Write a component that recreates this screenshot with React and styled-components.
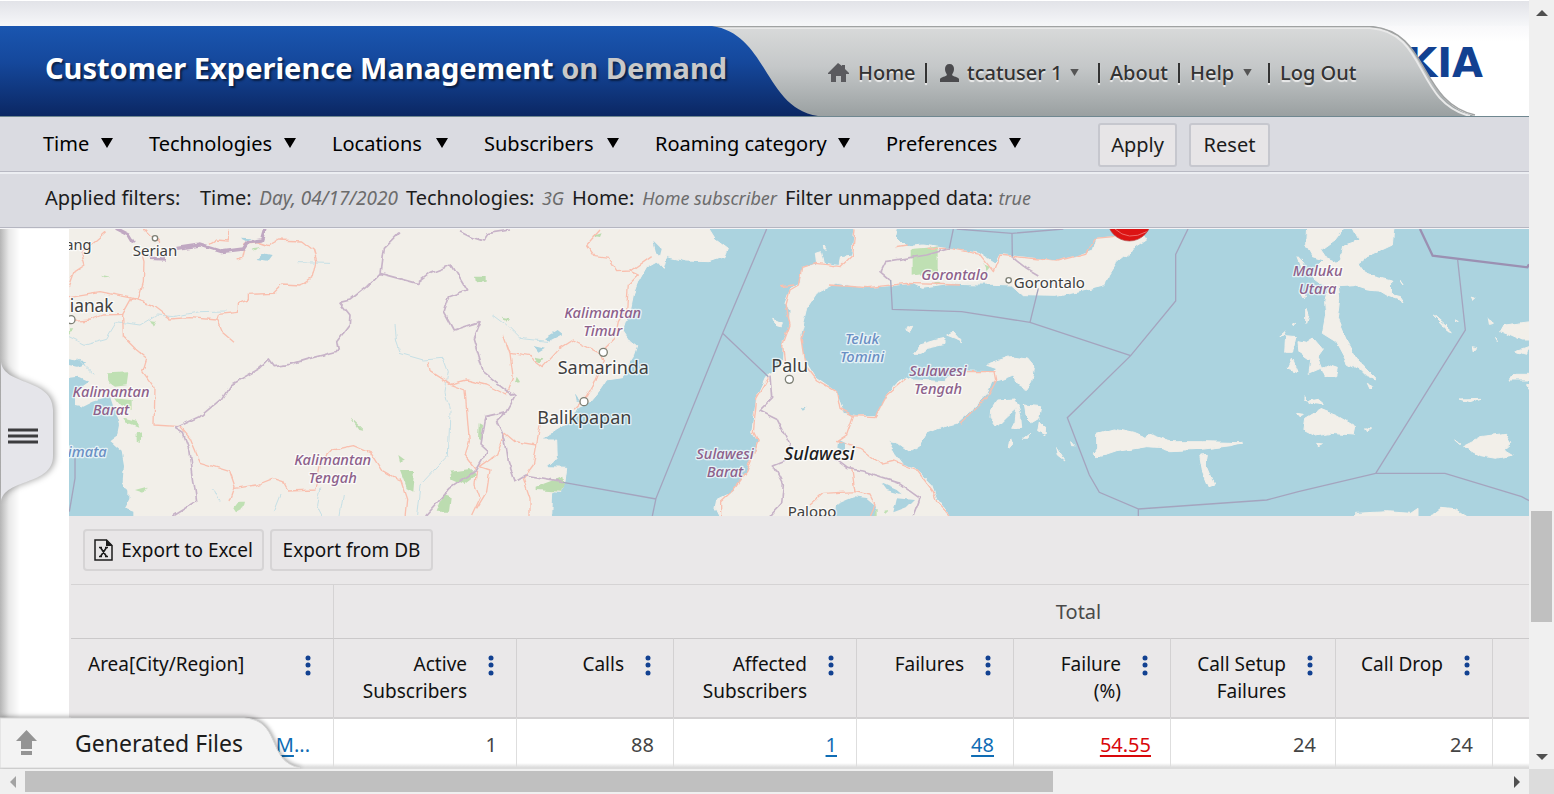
import React from "react";
import styled, { createGlobalStyle } from "styled-components";

const GlobalStyle = createGlobalStyle`
  *, *::before, *::after { box-sizing: border-box; }
  body {
    margin: 0;
    background: #fff;
    color: #1c1c1c;
    font-family: "Noto Sans", "Open Sans", sans-serif;
    font-size: 20px;
  }
  button { font: inherit; color: inherit; cursor: pointer; }
`;

/* ---------- frame ---------- */

const Frame = styled.div`
  display: grid;
  grid-template-columns: minmax(0, 1fr) 25px;
  grid-template-rows: minmax(0, 1fr) 25px;
  height: 100vh;
  overflow: hidden;
`;

const Page = styled.div`
  position: relative;
  display: flex;
  flex-direction: column;
  overflow: hidden;
`;

const ScrollBar = styled.div`
  display: flex;
  flex-direction: ${(p) => (p.$horizontal ? "row" : "column")};
  background: #f0f0f0;
  padding: ${(p) => (p.$horizontal ? "2px 0" : "0 2px")};
`;

const ScrollArrow = styled.div`
  flex: none;
  width: ${(p) => (p.$horizontal ? "25px" : "auto")};
  height: ${(p) => (p.$horizontal ? "auto" : "25px")};
  display: flex;
  align-items: center;
  justify-content: center;
`;

const ScrollSpace = styled.div`
  flex: ${(p) => p.$part} 1 0;
`;

const ScrollThumb = styled(ScrollSpace)`
  background: #c0c0c0;
`;

const ScrollCorner = styled.div`
  background: #dcdcdc;
`;

/* ---------- header ---------- */

const TopStrip = styled.div`
  flex: none;
  height: 26px;
  border-top: 1px solid #fff;
  background: linear-gradient(#e2e3e8, #f6f7f9);
`;

const Header = styled.header`
  position: relative;
  flex: none;
  display: flex;
  height: 91px;
  background: linear-gradient(#f8f8fa, #fff 16px);
  border-bottom: 1px solid #6f8790;
`;

const HeaderShape = styled.svg`
  position: absolute;
  inset: 0;
  width: 100%;
  height: 90px;
`;

const Brand = styled.div`
  position: absolute;
  right: 46px;
  top: 15px;
  line-height: 44px;
  font-family: "DejaVu Sans", sans-serif;
  font-weight: 700;
  font-size: 40px;
  color: #124191;
`;

const Title = styled.h1`
  position: relative;
  flex: none;
  width: 828px;
  margin: 0;
  padding-left: 45px;
  font-size: 29px;
  line-height: 84px;
  font-weight: 700;
  color: #fff;
  white-space: nowrap;
  text-shadow: 2px 2px 2px rgba(0, 0, 0, 0.5);
  span { color: #c9c9c9; }
`;

const Nav = styled.nav`
  position: relative;
  display: flex;
  align-items: center;
  height: 90px;
  padding-top: 3px;
  white-space: nowrap;
  font-weight: 500;
  color: #333;
  text-shadow: 0 2px 1px #eee;
`;

const NavLink = styled.a`
  display: flex;
  align-items: center;
  gap: ${(p) => (p.$iconGap ? "8px" : "9px")};
  width: ${(p) => p.$width}px;
  color: inherit;
  text-decoration: none;
  svg { flex: none; }
`;

const NavDivider = styled.span`
  width: 2px;
  height: 20px;
  margin: 0 ${(p) => (p.$wide ? "13px" : "10px")} 0 ${(p) => (p.$after ? "19px" : "10px")};
  background: #333;
  box-shadow: 0 2px 1px #eee;
`;

/* ---------- filter bars ---------- */

const FilterBar = styled.div`
  flex: none;
  display: flex;
  align-items: center;
  height: 55px;
  padding: 0 0 2px 43px;
  background: #dadbe1;
  border-bottom: 1px solid #b8b9c3;
`;

const FilterMenu = styled.button`
  display: flex;
  align-items: center;
  justify-content: space-between;
  width: ${(p) => p.$width}px;
  margin: 0 36px 0 0;
  padding: 0;
  border: 0;
  background: none;
  color: #000;
  white-space: nowrap;
`;

const BarButton = styled.button`
  height: 44px;
  width: ${(p) => p.$width}px;
  padding: 0;
  margin: 3px 12px 0 ${(p) => (p.$first ? "41px" : "0")};
  border: 2px solid #c6c7ce;
  border-radius: 3px;
  background: #e7e5e7;
`;

const AppliedBar = styled.div`
  flex: none;
  display: flex;
  align-items: center;
  height: 56px;
  padding: 0 0 6px 45px;
  background: #dadbe1;
  border-top: 2px solid #eceef2;
  border-bottom: 1px solid #b5b6c1;
  white-space: nowrap;
`;

const AppliedLabel = styled.span`
  width: 155px;
`;

const AppliedItem = styled.span`
  display: flex;
  align-items: baseline;
  justify-content: space-between;
  width: ${(p) => p.$width}px;
  margin-right: 8px;
  em { font-size: ${(p) => (p.$wide ? "19px" : "18px")}; color: #6c6c6c; }
`;

/* ---------- body ---------- */

const Body = styled.div`
  flex: 1;
  min-height: 0;
  display: flex;
  border-top: 1px solid #f4f4f6;
`;

const Gutter = styled.aside`
  flex: none;
  width: 69px;
  padding-top: 123px;
  background: linear-gradient(90deg, #b5b5b5, #e9e9e9 9px, #fff 20px);
`;

const DrawerButton = styled.button`
  display: block;
  padding: 0;
  border: 0;
  background: none;
  svg { display: block; overflow: visible; }
`;

const Main = styled.main`
  flex: 1;
  min-width: 0;
  overflow: hidden;
  background: #eae8e9;
`;

const MapView = styled.div`
  height: 287px;
  overflow: hidden;
  background: #abd3df;
  svg { display: block; width: 1460px; min-width: 100%; height: 287px; }
`;

const Toolbar = styled.div`
  display: flex;
  gap: 6px;
  height: 68px;
  padding: 13px 14px;
`;

const ToolButton = styled.button`
  display: flex;
  align-items: center;
  justify-content: center;
  gap: 8px;
  height: 42px;
  width: ${(p) => p.$width}px;
  padding: 0;
  border: 2px solid #d6d4d5;
  border-radius: 4px;
  background: #e8e6e7;
  color: #111;
  font-size: 19px;
  white-space: nowrap;
`;

const Table = styled.table`
  width: 1753px;
  margin-left: 2px;
  table-layout: fixed;
  border-collapse: separate;
  border-spacing: 0;
`;

const GroupCell = styled.th`
  height: 54px;
  padding: 0;
  border-top: 1px solid #d5d3d4;
  border-right: 1px solid #d5d3d4;
  font-weight: 400;
  color: #4a4a4a;
`;

const HeadCell = styled.th`
  height: 79px;
  padding: 12px 20px 0 17px;
  border-top: 1px solid #cbc9ca;
  border-right: 1px solid #d3d1d2;
  vertical-align: top;
  font-weight: 400;
  font-size: 19px;
  line-height: 27px;
  color: #111;
`;

const HeadContent = styled.div`
  display: flex;
  justify-content: ${(p) => (p.$start ? "space-between" : "flex-end")};
  gap: 19px;
  text-align: right;
  white-space: nowrap;
`;

const KebabButton = styled.button`
  height: 27px;
  padding: 0 2px;
  border: 0;
  background: none;
  svg { display: block; }
`;

const Cell = styled.td`
  height: 60px;
  padding: 0 ${(p) => (p.$name ? "23px" : "19px")} 8px 0;
  border-top: 2px solid #d3d1d2;
  border-right: 1px solid #dedede;
  background: #fff;
  text-align: right;
  color: #444;
`;

const CellLink = styled.a`
  color: ${(p) => (p.$alert ? "#d9070a" : "#0f6cb4")};
  text-decoration: underline;
  text-decoration-thickness: 2px;
  text-underline-offset: 3px;
`;

const Dots = styled.span`
  color: #0f6cb4;
`;

const BottomShade = styled.div`
  position: absolute;
  left: 0;
  right: 0;
  bottom: 0;
  height: 6px;
  border-bottom: 2px solid #dcdcdc;
  background: linear-gradient(rgba(230, 230, 230, 0), #dedede);
`;

const FilesTab = styled.button`
  position: absolute;
  left: 0;
  bottom: 0;
  display: flex;
  align-items: center;
  gap: 38px;
  width: 304px;
  height: 52px;
  padding: 0 0 0 16px;
  border: 0;
  background: none;
  font-size: 23px;
  white-space: nowrap;
`;

const TabShape = styled.svg`
  position: absolute;
  inset: 0;
  overflow: visible;
`;

const TabIcon = styled.svg`
  position: relative;
  flex: none;
`;

const TabText = styled.span`
  position: relative;
`;

/* ---------- drawings ---------- */

const Triangle = ({ size = 12, color = "#000" }) => (
  <svg width={size} height={size - 2} viewBox="0 0 12 10" aria-hidden="true">
    <path d="M0 0H12L6 10Z" fill={color} />
  </svg>
);

const arrowPaths = {
  up: "M0 6L6 0L12 6Z",
  down: "M0 0H12L6 6Z",
  left: "M6 0V12L0 6Z",
  right: "M0 0V12L6 6Z",
};

const Arrow = ({ dir, color = "#505050" }) => {
  const tall = dir === "left" || dir === "right";
  return (
    <svg width={tall ? 6 : 12} height={tall ? 12 : 6} aria-hidden="true">
      <path d={arrowPaths[dir]} fill={color} />
    </svg>
  );
};

const HomeIcon = () => (
  <svg width="21" height="20" viewBox="0 0 21 20" aria-hidden="true">
    <path d="M10 0L14 3V2H17V6L21 10V11H18V19H13V13H8V19H3V11H0V10Z" fill="#5a5a5e" />
  </svg>
);

const UserIcon = () => (
  <svg width="19" height="18" viewBox="0 0 19 18" aria-hidden="true">
    <path d="M9.500 0C12.500 0 14 2 14 5C14 8 12.500 9 12 11C13 12.500 18 13 19 15V18H0V15C1 13 6 12.500 7 11C6.500 9 5 8 5 5C5 2 6.500 0 9.500 0Z" fill="#4b4b4e" />
  </svg>
);

const ExcelIcon = () => (
  <svg width="19" height="22" viewBox="0 0 19 22" aria-hidden="true">
    <path d="M1 1H12.500L18 6.500V21H1Z" fill="none" stroke="#1c1c1c" strokeWidth="1.500" />
    <path d="M12 0.500L18.500 7H12Z" fill="#1c1c1c" />
    <path d="M5 8.500H8M11 8.500H14M5 17.500H8M11 17.500H14M6.500 8.500L12.500 17.500M12.500 8.500L6.500 17.500" stroke="#1c1c1c" strokeWidth="1.600" fill="none" />
  </svg>
);

const Kebab = () => (
  <svg width="6" height="22" viewBox="0 0 6 22" aria-hidden="true" fill="#124191">
    <circle cx="3" cy="4" r="2.500" />
    <circle cx="3" cy="11" r="2.500" />
    <circle cx="3" cy="19" r="2.500" />
  </svg>
);

const HeaderBackdrop = () => (
  <HeaderShape viewBox="0 0 1529 90" preserveAspectRatio="none" aria-hidden="true">
    <defs>
      <linearGradient id="grey" x1="0" y1="0" x2="0" y2="1">
        <stop offset="0" stopColor="#d9dada" />
        <stop offset="0.450" stopColor="#c5c8c9" />
        <stop offset="1" stopColor="#9aa0a1" />
      </linearGradient>
      <linearGradient id="blue" x1="0" y1="0" x2="0" y2="1">
        <stop offset="0" stopColor="#1a56b0" />
        <stop offset="0.400" stopColor="#15489c" />
        <stop offset="1" stopColor="#0b2763" />
      </linearGradient>
    </defs>
    <path d="M600 0H1370C1430 4 1418 76 1475 90H600Z" fill="url(#grey)" />
    <path d="M600 2H1370C1428 6 1414 76 1470 90" fill="none" stroke="#e9e9e9" strokeWidth="2" />
    <path d="M600 0.500H1370C1430 4 1418 76 1475 89" fill="none" stroke="#a0a2a2" strokeWidth="1.500" />
    <path d="M0 0H712C768 8 764 82 818 90H0Z" fill="url(#blue)" />
  </HeaderShape>
);

const landPaths = [
  // Borneo
  "M200 0H2120L2145 40L2185 70L2175 95L2130 110L2060 108L2000 95L1990 130L1970 108L1940 125L1915 170L1900 210L1890 260L1870 320L1890 350L1910 365L1900 395L1880 425L1868 458L1820 465L1800 495L1770 530L1735 545L1710 590L1670 615L1625 645L1670 645L1672 700L1640 728L1700 730L1695 770L1680 802L1655 800L1652 880H200Z",
];

const sulawesiPaths = [
  "M225 5L215 90L185 95L180 122L130 115L122 80L106 85L110 120L65 130L60 175L32 190L15 235L30 260L28 310L10 350L8 400L-5 430L-40 455L-70 520L-85 620L-65 650L-100 740L-140 800L-190 825L-195 850L-180 880H515L470 820L455 780L405 730L370 718L345 685L325 650L355 655L390 680L420 660L440 625L490 605L530 595L580 550L620 510L635 470L660 465L700 450L715 480L740 493L755 470L763 430L740 402L690 395L620 418L650 428L640 440L560 438L500 455L495 470L400 465L380 455L355 470L320 510L290 572L230 572L190 565L170 500L105 455L70 400L60 330L80 250L110 205L170 175L250 188L330 182L400 175L430 190L530 175L640 178L695 180L730 212L830 214L900 200L975 182L985 150L1010 110L1060 70L1100 45L1090 30L1000 35L950 40L940 75L900 90L830 108L720 95L660 88L645 115L600 85L510 72L430 60L380 65L345 30L350 5Z",
  "M400 385L420 360L470 345L495 340V358L440 370L420 385ZM500 330L520 322L545 350L525 340ZM380 305L398 307L390 322L378 315Z",
  "M650 525L705 522L715 545L680 575L650 605L630 580L632 555ZM712 540L722 570L725 610H695L705 590ZM730 540L785 545L780 575L755 590L735 570ZM775 590L797 610L795 632L770 620ZM695 640L700 655L685 672L688 650ZM730 640L750 625L740 640ZM830 668L855 705L835 690ZM875 650L885 662H878Z",
  "M950 625L1000 612L1060 625L1095 640L1110 628L1145 640L1160 652L1200 650L1270 650L1350 652L1385 655L1290 665L1180 670L1100 665L1010 680L980 690L950 695L940 685L950 670Z",
  "M-25 280L10 295L5 305L-15 300ZM130 60L138 72H132Z",
];

const malukuPaths = [
  "M458 5L455 60L475 95L510 105L485 130L480 160L520 190L512 230L515 270L505 325L545 350L580 415L620 435L640 455L665 462L615 410L575 340L550 280L557 220L553 185L600 182L640 195L675 198L700 213L750 230L740 215L712 208L713 168L640 150L615 115L640 95L715 60L720 5H595L615 45L570 60L560 100L550 115L515 100L498 75L540 45L570 5Z",
  "M395 332L425 335L415 385H392ZM432 350L455 355L478 340L508 375L490 400L503 430L520 420L550 430L545 452L510 455L500 430L465 445L470 405L435 380ZM415 400L432 440L402 430ZM375 335L398 315L390 330ZM415 300L425 295L418 305ZM455 250L462 270L455 295ZM432 95L450 115L445 130ZM440 205L458 210L450 222Z",
  "M450 515L460 528L450 525ZM465 525L490 520L512 540L470 535ZM428 565L448 568L435 575ZM455 580L500 553L550 573L605 605L600 630L530 625L485 633L450 615ZM635 608L650 612L640 620ZM485 655L500 657L490 662Z",
  "M137 690L160 688L155 720L180 780L165 785L145 735Z",
  "M0 638L50 650L110 655L230 655L262 652L230 662L150 672L50 677L0 660Z",
  "M605 865L700 860L770 865L792 850V880H605ZM835 870L860 850L910 855L945 880H835Z",
  "M926 662L980 635L1055 625L1073 655L1050 675L1075 690L1025 700L980 692Z",
  "M1040 318L1050 300L1130 290V345L1105 345L1060 325ZM1085 378L1122 365L1115 388ZM1065 465L1075 448H1130V465ZM918 522L978 520L945 530ZM838 270L895 320L880 315ZM955 212L966 218L960 224ZM1003 278L1015 295L1006 298ZM955 365L968 368L958 380ZM1025 340L1030 350ZM900 285L910 290ZM740 165L750 180ZM640 475L655 485L648 492ZM905 645L915 652ZM1115 478L1130 480V500Z",
];

const roads = [
  "M207 215L300 200L390 218L455 240L510 282L570 278L650 285L655 268L715 262V235L745 225V208L820 205L845 180L900 183L940 155L950 110L940 75L905 48L835 45L805 62L770 50L735 55L725 100L710 105",
  "M207 290L270 285L310 270L368 268L395 220L415 222L430 170L432 110L425 85",
  "M368 268L370 335L410 375L440 400L428 440L465 490L462 600L540 605L570 640L600 712L690 740L705 785L690 828",
  "M705 790L770 780L820 760L850 770L865 798L945 795L960 720L1000 675L1060 662L1115 685L1150 740L1200 768",
  "M650 285L665 320L702 352M207 190L225 140L255 120L245 85L320 20M430 10L450 30L480 50M630 58L650 45L685 48V10",
  "M1800 15L1760 60L1785 95L1825 100L1850 140L1890 138L1955 92M1890 138L1915 150L1885 180L1880 250L1855 290L1845 340L1800 385L1810 410L1785 470L1760 515L1725 550M1800 385L1720 345L1680 370L1630 425L1590 395L1530 385L1510 330M1530 385L1540 460L1520 510L1460 480L1400 465L1350 478L1290 440L1285 412M1350 478L1395 495L1408 650L1395 690L1430 735L1425 780L1440 820L1415 873M1440 725L1470 735L1460 800L1430 850M1440 725L1490 690L1515 625L1545 650L1610 660L1600 720L1570 760L1590 820V873M1610 660L1620 600M1200 760L1220 820L1215 873",
  "M2565 10L2558 90L2522 125L2450 115L2405 130L2395 180L2370 195L2358 240L2370 300L2348 360L2355 420M2780 70L2850 70L2940 88L2980 140L3000 90L3170 108L3260 85L3285 40L3340 35M2410 320L2403 340L2415 420L2450 465L2510 500L2520 550L2560 572L2625 575L2660 510L2720 458M2560 572L2540 630L2510 650L2580 670L2640 718L2685 708L2750 735L2800 800L2810 830L2850 873M2555 730L2565 800L2470 805L2430 840M2565 800L2610 810L2625 840L2610 873M2900 440L2985 440L2990 465L2960 520L2880 598M2305 460L2270 520L2260 620L2275 650L2240 740L2200 795L2162 830V873M2690 65L2720 60M2340 185L2380 180M2490 180L2600 188L2720 175L2880 180",
];

const landBorders = [
  "M345 10L385 30L400 55M450 100L495 102M530 70L600 60L665 80L730 72L745 50L785 45L795 10",
  "M1200 20L1150 70L1140 145L1100 185L1050 225L1020 232L1050 270L1048 300L1010 350L1015 378L930 400L870 418L820 425L805 405L780 430L690 480L665 520L600 575L525 610L550 625L570 680L580 760L590 830L520 873",
  "M1140 145L1250 175L1290 145L1355 120L1400 195L1345 215L1330 260L1360 315L1440 290L1420 340L1450 440L1545 515L1520 560L1455 575L1440 660L1462 680L1430 735L1350 790L1280 870M1520 560L1490 590L1515 640L1525 710L1545 768L1575 750L1690 770",
  "M2310 455L2315 520L2280 555L2330 580L2370 660V700L2320 720L2350 780L2345 835L2310 873M2500 700L2540 730L2590 738L2690 770L2760 820L2740 873M2670 165L2640 140L2655 110L2780 90L2850 70M3035 95L3080 130L3115 150",
  "M1380 20L1410 35L1450 48L1465 25L1530 15",
];

const seaBorders = [
  "M2300 12L2168 325L1968 820L1957 873M2168 325L2305 455M1690 772L1968 822",
  "M2860 12L2848 70M2672 165L2677 253L2885 260L3090 292L3392 392M3036 25L3037 95M3115 190L3090 292M3564 12L3527 88V228L3392 392L3202 578L3268 750L3298 802L3415 852V880M3415 852L3800 825L3895 800L4127 745H4335L4565 815L4590 828M4127 745L4396 315L4373 105",
  "M225 700V760L208 860M2870 12L3036 25L3190 12",
];

const greens = [
  ["#bfe0b3", "M325 445L385 442L380 478L345 482L328 470ZM345 520L395 525V555L360 540ZM370 580L410 590L415 605L380 592ZM410 625L425 622L422 655L410 650ZM700 850L715 830H735L730 850L708 862ZM450 285L470 288L462 305ZM405 795L440 785L430 803ZM207 310H220L207 330ZM300 152L328 158L310 160ZM755 70L785 66L765 76Z"],
  ["#bcdcb0", "M1350 740L1410 732L1430 750L1390 780L1355 765ZM1425 155H1460V170L1428 175ZM1436 595L1446 600L1442 650L1434 645ZM1200 738H1245L1240 800L1220 790ZM1610 785L1690 755L1695 780L1680 800L1610 795ZM1310 860L1330 810L1355 820L1350 860ZM1605 395L1630 400L1620 415ZM1550 455L1560 470L1545 475ZM1508 275L1530 280L1520 290ZM1780 32L1805 25L1800 36ZM1050 575L1090 615L1075 612ZM1195 690L1215 705L1200 710Z"],
  ["#bfe0b3", "M2735 72L2813 65V140L2735 152ZM2950 118L2970 125L2960 138ZM2800 172L2822 175L2810 182ZM2620 855L2630 852V873H2622ZM2650 860L2668 858L2655 870Z"],
];

const lakes = [
  "M207 400L240 405L260 415L230 425L207 420Z",
  "M200 460L235 455L268 470L225 500L225 540L250 545L280 530L330 515L345 560L357 600L350 635L330 650L365 680L372 720L368 770L385 800V825L372 850L400 860V880H200Z",
  "M790 85L815 90L800 110L770 105ZM722 38L755 40L740 48ZM1635 340L1670 318L1685 330L1650 348ZM1600 360L1635 368L1615 380ZM1725 505L1742 530L1730 530Z",
  "M2515 645L2535 655V678L2512 668ZM2505 840L2560 817L2600 822L2628 845L2620 880H2500ZM2645 775L2690 795L2705 808L2660 795ZM2690 820L2745 825L2720 850L2680 865ZM2405 545L2420 542L2412 555Z",
  "M1960 50L1985 75L1980 95L1968 80Z",
];

const rivers = [
  "M207 335L255 358L320 340L350 290L420 300L470 270L520 275L600 260L680 258",
  "M890 110L990 112M1200 385L1270 405L1330 400L1345 440L1335 500L1350 560L1345 690L1260 780L1250 873M1480 270L1520 300L1560 340L1650 350M820 860L840 810M960 790L950 840L965 870M1185 300L1190 350L1200 380M230 400L280 445M640 790L660 830M1030 810L1020 870",
];

const towns = [
  [465, 40, 8],
  [213, 284, 12],
  [1810, 382, 12],
  [1752, 530, 12],
  [2368, 463, 12],
  [3026, 166, 8],
];

const mapLabels = [
  { x: 235, y: 76, size: 44, kind: "town", lines: ["ang"] },
  { x: 465, y: 92, size: 45, kind: "town", lines: ["Serian"] },
  { x: 275, y: 260, size: 52, kind: "town", lines: ["ianak"] },
  { x: 333, y: 515, size: 44, kind: "region", lines: ["Kalimantan", "Barat"] },
  { x: 262, y: 697, size: 44, kind: "water", lines: ["imata"] },
  { x: 998, y: 719, size: 44, kind: "region", lines: ["Kalimantan", "Tengah"] },
  { x: 1808, y: 278, size: 44, kind: "region", lines: ["Kalimantan", "Timur"] },
  { x: 1810, y: 446, size: 54, kind: "town", lines: ["Samarinda"] },
  { x: 1753, y: 598, size: 54, kind: "town", lines: ["Balikpapan"] },
  { x: 2369, y: 440, size: 54, kind: "town", lines: ["Palu"] },
  { x: 2175, y: 701, size: 44, kind: "region", lines: ["Sulawesi", "Barat"] },
  { x: 2458, y: 705, size: 54, kind: "island", lines: ["Sulawesi"] },
  { x: 2436, y: 877, size: 45, kind: "town", lines: ["Palopo"] },
  { x: 2586, y: 358, size: 44, kind: "water", lines: ["Teluk", "Tomini"] },
  { x: 2864, y: 164, size: 44, kind: "region", lines: ["Gorontalo"] },
  { x: 3148, y: 188, size: 45, kind: "town", lines: ["Gorontalo"] },
  { x: 2814, y: 454, size: 44, kind: "region", lines: ["Sulawesi", "Tengah"] },
  { x: 3953, y: 153, size: 44, kind: "region", lines: ["Maluku", "Utara"] },
];

const labelColors = { town: "#3f3f3f", region: "#8d618b", water: "#6a8fc4", island: "#1d1d1d" };

const RegionMap = () => (
  <MapView>
    <svg viewBox="207 12 4380 861" preserveAspectRatio="xMinYMin slice" role="img" aria-label="Region map">
      <defs>
        <filter id="coast" filterUnits="userSpaceOnUse" x="150" y="0" width="4500" height="900">
          <feTurbulence type="fractalNoise" baseFrequency="0.030" numOctaves="2" seed="4" />
          <feDisplacementMap in="SourceGraphic" scale="16" xChannelSelector="R" yChannelSelector="G" />
        </filter>
      </defs>
      <g filter="url(#coast)">
        <g fill="#f2efe9" stroke="#f2efe9" strokeWidth="3" strokeLinejoin="round">
          {landPaths.map((d) => <path key={d} d={d} />)}
          <g transform="translate(2340 0)">{sulawesiPaths.map((d) => <path key={d} d={d} />)}</g>
          <g transform="translate(3462 0)">{malukuPaths.map((d) => <path key={d} d={d} />)}</g>
        </g>
        {greens.map(([fill, d]) => <path key={d} d={d} fill={fill} />)}
        {lakes.map((d) => <path key={d} d={d} fill="#abd3df" />)}
        <g fill="none" strokeLinejoin="round">
          {rivers.map((d) => <path key={d} d={d} stroke="#c6e0e6" strokeWidth="3" />)}
          {roads.map((d) => <path key={d} d={d} stroke="#f9bfae" strokeWidth="4" />)}
          {landBorders.map((d) => <path key={d} d={d} stroke="#c7b3c8" strokeWidth="5" />)}
          <path d={landBorders[0]} stroke="#c0a8c2" strokeWidth="10" />
        </g>
      </g>
      <g fill="none" stroke="#a4a4be" strokeWidth="4">
        {seaBorders.map((d) => <path key={d} d={d} />)}
        <path d="M4260 12L4298 92L4582 127L4587 118" stroke="#9b90b2" strokeWidth="7" />
      </g>
      <circle cx="3388" cy="-18" r="66" fill="#dc1414" stroke="#b04a4a" strokeWidth="2" />
      <path d="M3345 12Q3385 50 3440 20" fill="none" stroke="#ee6a6a" strokeWidth="3" />
      {towns.map(([cx, cy, r]) => (
        <circle key={cx} cx={cx} cy={cy} r={r} fill="#fff" stroke="#7d7f74" strokeWidth="4" />
      ))}
      {mapLabels.map((l) => (
        <text
          key={l.x + l.lines[0]}
          textAnchor="middle"
          fontSize={l.size}
          fontWeight={l.kind === "island" ? 500 : l.kind === "town" ? 450 : 500}
          fontStyle={l.kind === "town" ? "normal" : "italic"}
          fill={labelColors[l.kind]}
          stroke="#fff"
          strokeOpacity="0.700"
          strokeWidth="8"
          strokeLinejoin="round"
          paintOrder="stroke"
        >
          {l.lines.map((t, i) => (
            <tspan key={t} x={l.x} y={l.y + i * 54}>{t}</tspan>
          ))}
        </text>
      ))}
    </svg>
  </MapView>
);

/* ---------- data ---------- */

const filters = [
  ["Time", 70],
  ["Technologies", 147],
  ["Locations", 116],
  ["Subscribers", 135],
  ["Roaming category", 195],
  ["Preferences", 135],
];

const applied = [
  ["Time:", "Day, 04/17/2020", 198, true],
  ["Technologies:", "3G", 158],
  ["Home:", "Home subscriber", 205],
  ["Filter unmapped data:", "true", 246],
];

const columns = [
  { lines: ["Area[City/Region]"], width: 263, start: true },
  { lines: ["Active", "Subscribers"], width: 183, value: "1" },
  { lines: ["Calls"], width: 157, value: "88" },
  { lines: ["Affected", "Subscribers"], width: 183, value: "1", link: true },
  { lines: ["Failures"], width: 157, value: "48", link: true },
  { lines: ["Failure", "(%)"], width: 157, value: "54.55", link: true, alert: true },
  { lines: ["Call Setup", "Failures"], width: 165, value: "24" },
  { lines: ["Call Drop"], width: 157, value: "24" },
  { lines: [""], width: 331, value: "" },
];

export default function App() {
  return (
    <>
      <GlobalStyle />
      <Frame>
        <Page>
          <TopStrip />
          <Header>
            <Brand>KIA</Brand>
            <HeaderBackdrop />
            <Title>Customer Experience Management <span>on Demand</span></Title>
            <Nav>
              <NavLink href="#home" $width={87}><HomeIcon />Home</NavLink>
              <NavDivider $wide />
              <NavLink href="#user" $iconGap $width={139}><UserIcon />tcatuser 1<Triangle size={9} color="#555" /></NavLink>
              <NavDivider $after />
              <NavLink href="#about" $width={58}>About</NavLink>
              <NavDivider />
              <NavLink href="#help" $width={59}>Help<Triangle size={9} color="#555" /></NavLink>
              <NavDivider $after />
              <NavLink href="#logout" $width={76}>Log Out</NavLink>
            </Nav>
          </Header>
          <FilterBar>
            {filters.map(([name, width]) => (
              <FilterMenu key={name} type="button" $width={width}>{name}<Triangle /></FilterMenu>
            ))}
            <BarButton type="button" $first $width={79}>Apply</BarButton>
            <BarButton type="button" $width={81}>Reset</BarButton>
          </FilterBar>
          <AppliedBar>
            <AppliedLabel>Applied filters:</AppliedLabel>
            {applied.map(([name, value, width, wide]) => (
              <AppliedItem key={name} $width={width} $wide={wide}>{name}<em>{value}</em></AppliedItem>
            ))}
          </AppliedBar>
          <Body>
            <Gutter>
              <DrawerButton type="button" aria-label="Open menu">
                <svg width="58" height="160" viewBox="0 0 58 160">
                  <path
                    d="M1 10C4 34 53 26 53 58V104C53 134 4 126 1 150Z"
                    fill="#e5e5ea"
                    style={{ filter: "drop-shadow(2px 0 3px rgba(0,0,0,0.35))" }}
                  />
                  <path d="M8 78H38M8 84H38M8 90H38" stroke="#3c3c3e" strokeWidth="3" />
                </svg>
              </DrawerButton>
            </Gutter>
            <Main>
              <RegionMap />
              <Toolbar>
                <ToolButton type="button" $width={181}><ExcelIcon />Export to Excel</ToolButton>
                <ToolButton type="button" $width={163}>Export from DB</ToolButton>
              </Toolbar>
              <Table>
                <colgroup>
                  {columns.map((c) => <col key={c.lines.join() + c.width} style={{ width: c.width }} />)}
                </colgroup>
                <thead>
                  <tr>
                    <GroupCell />
                    <GroupCell colSpan={8} scope="colgroup">Total</GroupCell>
                  </tr>
                  <tr>
                    {columns.map((c) => (
                      <HeadCell key={c.lines.join()} scope="col">
                        <HeadContent $start={c.start}>
                          <span>
                            {c.lines.map((t, i) => <React.Fragment key={t}>{i > 0 && <br />}{t}</React.Fragment>)}
                          </span>
                          <KebabButton type="button" aria-label="Column menu"><Kebab /></KebabButton>
                        </HeadContent>
                      </HeadCell>
                    ))}
                  </tr>
                </thead>
                <tbody>
                  <tr>
                    {columns.map((c) => (
                      <Cell key={c.lines.join()} $name={c.start}>
                        {c.start && <><CellLink href="#area">M</CellLink><Dots>...</Dots></>}
                        {c.link ? <CellLink href="#value" $alert={c.alert}>{c.value}</CellLink> : c.value}
                      </Cell>
                    ))}
                  </tr>
                </tbody>
              </Table>
            </Main>
          </Body>
          <BottomShade />
          <FilesTab type="button">
            <TabShape width="304" height="52" viewBox="0 0 304 52" aria-hidden="true">
              <path
                d="M0 1H244C282 3 266 44 300 51H0Z"
                fill="#f3f3f3"
                stroke="#d8d8d8"
                style={{ filter: "drop-shadow(1px -1px 2px rgba(0,0,0,0.35))" }}
              />
            </TabShape>
            <TabIcon width="21" height="26" viewBox="0 0 21 26" aria-hidden="true">
              <path d="M10.500 0L21 11H16V19H5V11H0ZM5 21H16V25H5Z" fill="#949494" />
            </TabIcon>
            <TabText>Generated Files</TabText>
          </FilesTab>
        </Page>
        <ScrollBar aria-hidden="true">
          <ScrollArrow><Arrow dir="up" /></ScrollArrow>
          <ScrollSpace $part={486} />
          <ScrollThumb $part={111} />
          <ScrollSpace $part={122} />
          <ScrollArrow><Arrow dir="down" /></ScrollArrow>
        </ScrollBar>
        <ScrollBar $horizontal aria-hidden="true">
          <ScrollArrow $horizontal><Arrow dir="left" color="#a3a3a3" /></ScrollArrow>
          <ScrollThumb $part={1028} />
          <ScrollSpace $part={451} />
          <ScrollArrow $horizontal><Arrow dir="right" /></ScrollArrow>
        </ScrollBar>
        <ScrollCorner />
      </Frame>
    </>
  );
}
